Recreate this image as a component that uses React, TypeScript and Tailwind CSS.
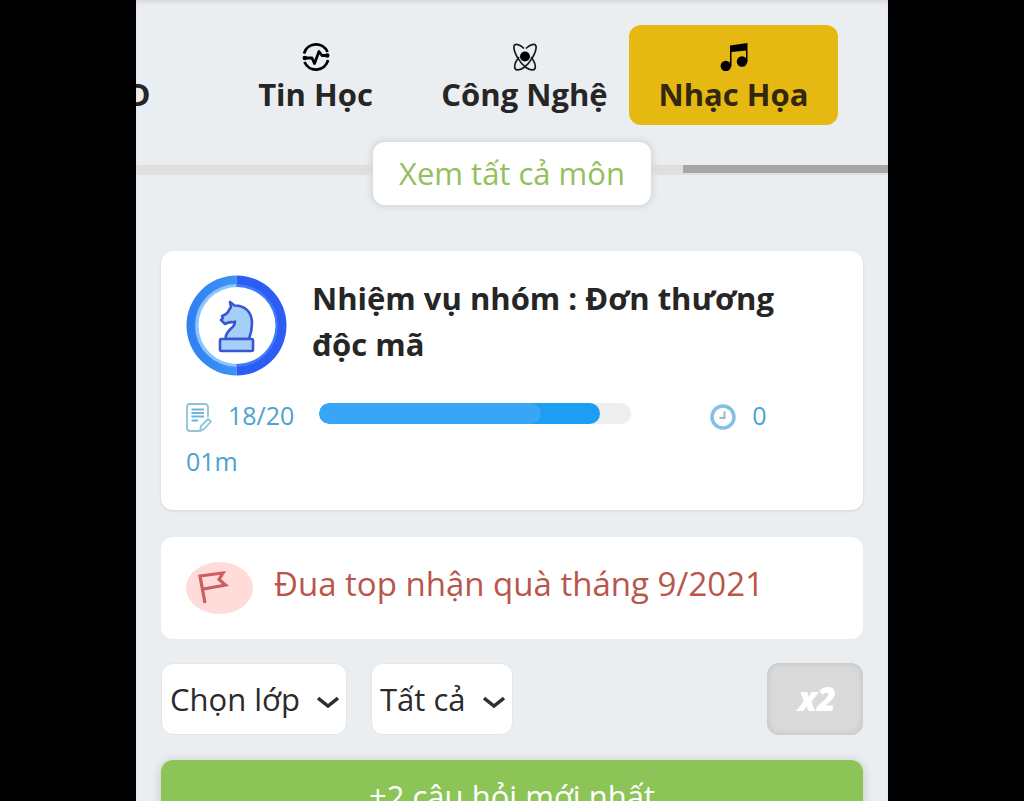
import type { ReactNode } from 'react'

function SignalIcon() {
  return (
    <svg viewBox="0 0 28 28" className="h-7 w-7" fill="none" stroke="#000" strokeWidth="2.8" aria-hidden="true">
      <path d="M2 10.5a12.500 12.500 0 0 1 23.500-1.500" />
      <path d="M2.500 19a12.500 12.500 0 0 0 23.600-1.800" />
      <path d="M2.500 15H10l2.500 5.500L17 8.500l3 4H25" strokeLinejoin="round" />
      <circle cx="2.800" cy="15" r="2.300" fill="#000" stroke="none" />
      <circle cx="25.200" cy="12.500" r="2.300" fill="#000" stroke="none" />
    </svg>
  )
}

function AtomIcon() {
  return (
    <svg viewBox="0 0 28 28" className="h-7 w-7" fill="none" stroke="#1a1a1a" aria-hidden="true">
      <path d="M13 5.500C9 1.500 4 0 3 3c-1 6 6 17 12 21.500 4 3 8 3 9 1 1-3-.5-7-4-11.500" strokeWidth="1.700" />
      <path d="M15 5.500c4-4 9-5.500 10-2.500 1 6-6 17-12 21.500-4 3-8 3-9 1-1-3 .5-7 4-11.500" strokeWidth="1.700" />
      <circle cx="14" cy="13.500" r="5" fill="#000" stroke="none" />
    </svg>
  )
}

function MusicIcon() {
  return (
    <svg viewBox="0 0 28 28" className="h-7 w-7" fill="#000" aria-hidden="true">
      <path d="M10 2.500 27.500 0v19h-1.500V7.500L11.500 9v14.500H10z" />
      <circle cx="5.800" cy="23" r="5.200" />
      <circle cx="22" cy="18.500" r="5.200" />
    </svg>
  )
}

function KnightBadge() {
  return (
    <svg viewBox="0 0 101 101" className="h-[101px] w-[101px] shrink-0" aria-hidden="true">
      <defs>
        <linearGradient id="ringLeft" x1="0" x2="1">
          <stop offset="0" stopColor="#2f80f2" />
          <stop offset="1" stopColor="#3e93f6" />
        </linearGradient>
      </defs>
      <path d="M50.500.5a50 50 0 0 0 0 100z" fill="url(#ringLeft)" />
      <path d="M50.500.5a50 50 0 0 1 0 100z" fill="#2b5cf4" />
      <path d="M50.500 9a41.500 41.500 0 0 0 0 83z" fill="#8cc4fb" />
      <path d="M50.500 9a41.500 41.500 0 0 1 0 83z" fill="#3f7bf8" />
      <circle cx="51" cy="50.500" r="38.500" fill="#fff" />
      <g fill="#a3cff8" stroke="#3a55cf" strokeWidth="2.600" strokeLinejoin="round">
        <path d="M39.500 64c0-5 2-7 4.500-9.500 3-2.500 5.500-4.500 5-8-2 1.500-4 0-6.500 1L39 49l-4-4 2-2-1-2c3-1 6-3 7-6l2-3-1-5 4.500 3.500C59 30.500 66 37 66 48c0 7-1 11-3 16z" />
        <rect x="34" y="64" width="33" height="12" rx="1.500" />
      </g>
    </svg>
  )
}

function NoteIcon() {
  return (
    <svg viewBox="0 0 26 29" className="mt-1 h-[29px] w-[26px]" fill="none" stroke="#8fc3dc" strokeWidth="1.800" aria-hidden="true">
      <path d="M22 14V4a3 3 0 0 0-3-3H4a3 3 0 0 0-3 3v21a3 3 0 0 0 3 3h9" />
      <path d="M5.500 6.500H18M5.500 10H18M5.500 13.500H18M5.500 17.500H12" stroke="#6fb4dc" />
      <path d="m14 28 1-5 7-7 3 2.500-7 7.500z" />
    </svg>
  )
}

function ClockIcon() {
  return (
    <svg viewBox="0 0 26 26" className="mt-1 h-[26px] w-[26px]" fill="none" aria-hidden="true">
      <circle cx="13" cy="13" r="11" stroke="#84bfe8" strokeWidth="3.500" />
      <path d="M14.500 7.500V14H9.500" stroke="#8fb9d4" strokeWidth="2" />
    </svg>
  )
}

function FlagIcon() {
  return (
    <svg viewBox="0 0 67 52" className="h-[52px] w-[67px] shrink-0" fill="none" aria-hidden="true">
      <ellipse cx="33.500" cy="26" rx="33.500" ry="26" fill="#ffdcd9" />
      <path d="M19 41 14 14l23-3-4 6.500 6.500 5.500-22 4" stroke="#cf5d60" strokeWidth="3.200" />
    </svg>
  )
}

const subjects: { name: string; icon: ReactNode; active?: boolean }[] = [
  { name: 'GDCD', icon: null },
  { name: 'Tin Học', icon: <SignalIcon /> },
  { name: 'Công Nghệ', icon: <AtomIcon /> },
  { name: 'Nhạc Họa', icon: <MusicIcon />, active: true },
]

function FilterSelect({ label, option }: { label: string; option: string }) {
  return (
    <div className="relative">
      <select
        aria-label={label}
        className="h-[72px] appearance-none rounded-xl border border-[#e3e5e7] bg-white pr-[46px] pl-2 text-[31px] text-[#2b2b2b]"
      >
        <option>{option}</option>
      </select>
      <svg
        viewBox="0 0 22 13"
        className="pointer-events-none absolute top-[33px] right-2 h-[13px] w-[22px]"
        fill="none"
        stroke="#2f2f2f"
        strokeWidth="3.500"
        aria-hidden="true"
      >
        <path d="m1 2 10 8L21 2" />
      </svg>
    </div>
  )
}

export default function App() {
  const done = 18
  const total = 20

  return (
    <div className="flex h-screen justify-center overflow-hidden bg-black font-['Open_Sans',sans-serif] text-[#262626]">
      <main className="w-full max-w-[752px] overflow-hidden bg-[#ebeef1] shadow-[inset_0_3px_3px_#d9dcdf]">
        {/* Subjects */}
        <nav className="flex justify-end overflow-hidden pt-[25px] pr-[50px]">
          {subjects.map(subject => (
            <button
              key={subject.name}
              className={`flex h-[100px] w-[209px] shrink-0 flex-col items-center rounded-xl pt-[18px] text-[31px] leading-[46px] font-bold ${
                subject.active ? 'bg-[#e6b812] text-[#33270f]' : ''
              }`}
            >
              <span className="h-7">{subject.icon}</span>
              {subject.name}
            </button>
          ))}
        </nav>
        <div className="mt-10 flex h-[10px] justify-end bg-[#dfdfdf]">
          <div className="h-2 w-[205px] bg-[#a6a6a6]" />
        </div>
        <div className="relative -mt-[33px] flex justify-center">
          <button className="h-[63px] rounded-xl bg-white px-[26px] text-[31px] text-[#92c05c] shadow-[0_0_6px_2px_#d3d6d8]">
            Xem tất cả môn
          </button>
        </div>

        <div className="px-[25px] pt-[46px]">
          {/* Group mission */}
          <section className="rounded-xl bg-white px-[25px] pt-6 pb-[26px] shadow-[0_1px_2px_1px_#dddfe1]">
            <div className="flex gap-[25px] pr-6">
              <KnightBadge />
              <h2 className="text-[31px] leading-[46px] font-bold">Nhiệm vụ nhóm : Đơn thương độc mã</h2>
            </div>
            <div className="mt-4 flex h-[46px] items-center text-[25px] leading-[46px] text-[#4aa3d0]">
              <NoteIcon />
              <span className="ml-4">{done}/{total}</span>
              <div className="mb-1 ml-[25px] h-[21px] w-[312px] overflow-hidden rounded-full bg-[#eee]">
                <div className="h-full rounded-full bg-[#1e9df5]" style={{ width: `${(done / total) * 100}%` }}>
                  <div className="h-full w-[79%] rounded-full bg-[#37a7f5]" />
                </div>
              </div>
              <span className="ml-[79px]"><ClockIcon /></span>
              <span className="ml-4">0</span>
            </div>
            <p className="text-[25px] leading-[46px] text-[#4aa3d0]">01m</p>
          </section>

          {/* Monthly race */}
          <a href="#race" className="mt-[27px] flex h-[102px] items-center gap-[21px] rounded-xl bg-white px-[25px] text-[33px] text-[#b9564b]">
            <FlagIcon />
            <span className="pb-2">Đua top nhận quà tháng 9/2021</span>
          </a>

          {/* Filters */}
          <div className="mt-6 flex gap-6">
            <FilterSelect label="Lớp" option="Chọn lớp" />
            <FilterSelect label="Câu hỏi" option="Tất cả" />
            <button className="ml-auto h-[72px] w-24 rounded-xl bg-[#dadada] pl-1 text-[33px] font-extrabold text-white italic shadow-[inset_0_0_6px_1px_#c4c4c4]">
              x2
            </button>
          </div>

          <button className="mt-[25px] h-[72px] w-full rounded-xl bg-[#8dc457] text-[31px] text-white shadow-[0_2px_8px_3px_#d3d6d9]">
            +2 câu hỏi mới nhất
          </button>
        </div>
      </main>
    </div>
  )
}
